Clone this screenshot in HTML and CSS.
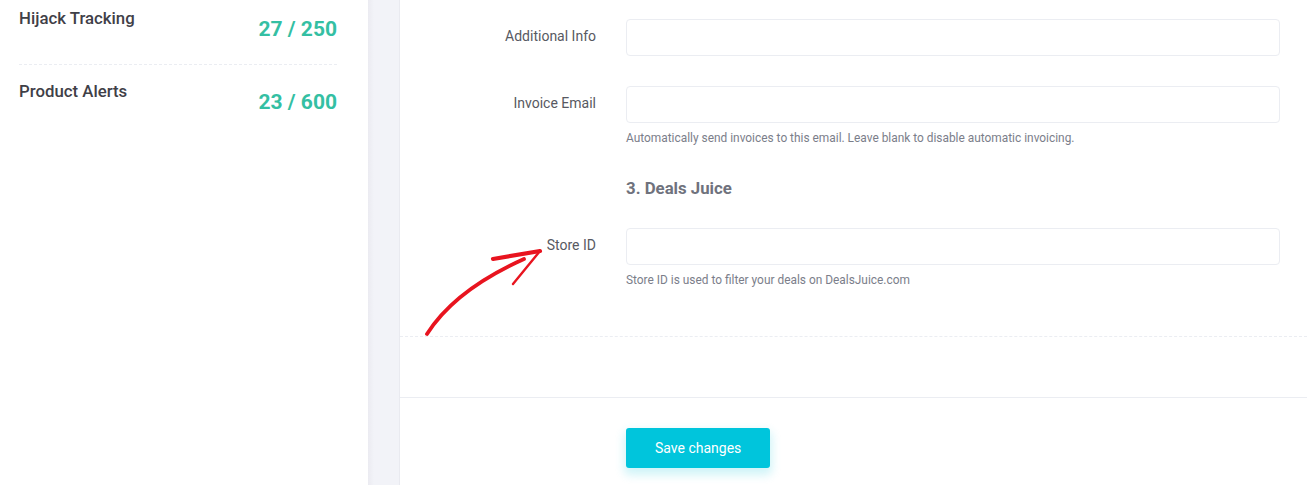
FILE: index.html
```html
<!DOCTYPE html>
<html lang="en">
<head>
<meta charset="utf-8">
<title>Settings</title>
<link rel="stylesheet" href="styles.css">
</head>
<body>
<div class="page">
  <aside class="usage">
    <div class="usage-row">
      <span class="usage-label">Hijack Tracking</span>
      <span class="usage-value">27 / 250</span>
    </div>
    <div class="usage-row">
      <span class="usage-label">Product Alerts</span>
      <span class="usage-value">23 / 600</span>
    </div>
  </aside>
  <div class="gutter"></div>
  <main class="panel">
    <div class="form-body">
      <div class="form-row">
        <label class="form-label">Additional Info</label>
        <div class="form-field"><input class="input" type="text"></div>
      </div>
      <div class="form-row with-help">
        <label class="form-label">Invoice Email</label>
        <div class="form-field">
          <input class="input" type="text">
          <div class="help">Automatically send invoices to this email. Leave blank to disable automatic invoicing.</div>
        </div>
      </div>
      <div class="form-row heading-row">
        <div></div>
        <h3 class="section-title">3. Deals Juice</h3>
      </div>
      <div class="form-row">
        <label class="form-label">Store ID</label>
        <div class="form-field">
          <input class="input" type="text">
          <div class="help">Store ID is used to filter your deals on DealsJuice.com</div>
        </div>
      </div>
    </div>
    <div class="spacer"></div>
    <div class="form-footer">
      <div></div>
      <div><button class="btn">Save changes</button></div>
    </div>
    <svg class="arrow" width="130" height="95" viewBox="0 0 130 95">
      <path d="M7 89 Q35 45 104 14" fill="none" stroke="#e8141f" stroke-width="3.8" stroke-linecap="round"/>
      <path d="M73 14 L120 6" fill="none" stroke="#e8141f" stroke-width="4.2" stroke-linecap="round"/>
      <path d="M93 39 L120 6" fill="none" stroke="#e8141f" stroke-width="2.4" stroke-linecap="round"/>
    </svg>
  </main>
</div>
</body>
</html>
```

FILE: styles.css
```css
html, body {
  margin: 0;
  padding: 0;
  background: #fff;
  font-family: Roboto, "Liberation Sans", Arial, sans-serif;
}

.page {
  display: flex;
  height: 485px;
  overflow: hidden;
}

.usage {
  width: 368px;
  box-sizing: border-box;
  padding: 0 31px 0 19px;
  background: #fff;
}

.usage-row {
  display: flex;
  justify-content: space-between;
  align-items: flex-start;
  padding: 14px 0 22px;
  border-bottom: 1px dashed #ebedf2;
}

.usage-row:first-child {
  padding-top: 6px;
}

.usage-row:last-child {
  border-bottom: none;
}

.usage-label {
  font-size: 16.8px;
  line-height: 24px;
  font-weight: 500;
  color: #3f4047;
}

.usage-value {
  margin-top: 11px;
  font-size: 21px;
  line-height: 25px;
  font-weight: 700;
  color: #34bfa3;
}

.gutter {
  width: 31px;
  flex: none;
  background: linear-gradient(to right, #ebebf1 0, #f2f3f8 6px, #f2f3f8 100%);
}

.panel {
  position: relative;
  flex: 1;
  border-left: 1px solid #e9eaf0;
  background: #fff;
}

.form-body {
  padding: 19px 27px 47px 0;
  border-bottom: 1px dashed #ebedf2;
}

.form-row {
  display: grid;
  grid-template-columns: 196px 1fr;
  column-gap: 30px;
  margin-bottom: 30px;
}

.form-row.with-help {
  margin-bottom: 29px;
}

.form-row:last-child {
  margin-bottom: 0;
}

.form-label {
  text-align: right;
  font-size: 14px;
  line-height: 20px;
  padding-top: 7px;
  color: #575962;
}

.input {
  display: block;
  width: 100%;
  height: 37px;
  box-sizing: border-box;
  border: 1px solid #ebedf2;
  border-radius: 4px;
  background: #fff;
  outline: none;
}

.help {
  margin-top: 6px;
  font-size: 11.9px;
  line-height: 18px;
  color: #7b7e8a;
}

.form-row.heading-row {
  margin-bottom: 28px;
}

.section-title {
  margin: 0;
  font-size: 16.8px;
  line-height: 24px;
  font-weight: 700;
  color: #6f727d;
}

.spacer {
  height: 60px;
}

.form-footer {
  display: grid;
  grid-template-columns: 196px 1fr;
  column-gap: 30px;
  border-top: 1px solid #ebedf2;
  padding-top: 30px;
}

.btn {
  height: 40px;
  padding: 0 29px;
  border: none;
  border-radius: 3px;
  background: #00c5dc;
  color: #fff;
  font-family: Roboto, "Liberation Sans", Arial, sans-serif;
  font-size: 14px;
  box-shadow: 0 5px 10px 2px rgba(0, 197, 220, 0.19);
}

.arrow {
  position: absolute;
  left: 20px;
  top: 245px;
}
```
